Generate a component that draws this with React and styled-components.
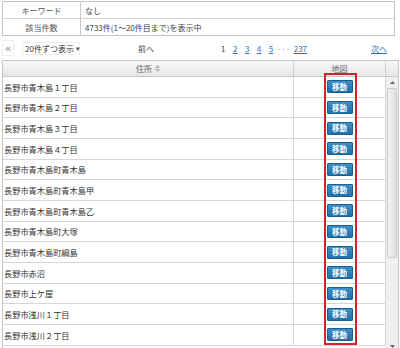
import React from "react";
import styled, { createGlobalStyle } from "styled-components";

const GlobalStyle = createGlobalStyle`
  body {
    margin: 0;
    background: #fff;
    font-family: "Noto Sans CJK JP", "Noto Sans", sans-serif;
    color: #333;
  }
`;

const addresses = [
  "長野市青木島１丁目",
  "長野市青木島２丁目",
  "長野市青木島３丁目",
  "長野市青木島４丁目",
  "長野市青木島町青木島",
  "長野市青木島町青木島甲",
  "長野市青木島町青木島乙",
  "長野市青木島町大塚",
  "長野市青木島町綱島",
  "長野市赤沼",
  "長野市上ケ屋",
  "長野市浅川１丁目",
  "長野市浅川２丁目",
];

const pages = ["2", "3", "4", "5"];

const SortIcon = () => (
  <svg width="5" height="7" viewBox="0 0 5 7">
    <path d="M2.5 0 L5 3 L0 3 Z" fill="#b5b5b5" />
    <path d="M2.5 7 L5 4 L0 4 Z" fill="#b5b5b5" />
  </svg>
);

const Arrow = ({ down }) => (
  <svg width="5" height="3" viewBox="0 0 5 3">
    <path d={down ? "M0 0 L5 0 L2.5 3 Z" : "M2.5 0 L5 3 L0 3 Z"} fill="#666" />
  </svg>
);

const App = () => {
  return (
    <Page>
      <GlobalStyle />
      <InfoTable>
        <InfoRow>
          <InfoLabel>キーワード</InfoLabel>
          <InfoValue>なし</InfoValue>
        </InfoRow>
        <InfoRow last>
          <InfoLabel>該当件数</InfoLabel>
          <InfoValue>4733件(1～20件目まで)を表示中</InfoValue>
        </InfoRow>
      </InfoTable>

      <Nav>
        <FirstBtn>«</FirstBtn>
        <PerPage>
          20件ずつ表示 <Caret>▾</Caret>
        </PerPage>
        <PrevText>前へ</PrevText>
        <Pages>
          <Current>1</Current>
          {pages.map((p) => (
            <PageLink key={p}>{p}</PageLink>
          ))}
          <Dots>···</Dots>
          <PageLink>237</PageLink>
        </Pages>
        <NextLink>次へ</NextLink>
      </Nav>

      <Grid>
        <Header>
          <HeadCell>
            住所 <SortIcon />
          </HeadCell>
          <HeadCell>地図</HeadCell>
          <HeadCell />
        </Header>
        <Body>
          <RowList>
            {addresses.map((a, i) => (
              <Row key={i}>
                <AddrCell>{a}</AddrCell>
                <MapCell>
                  <MoveBtn>移動</MoveBtn>
                </MapCell>
              </Row>
            ))}
          </RowList>
          <ScrollBar>
            <ScrollArrow>
              <Arrow />
            </ScrollArrow>
            <Track>
              <Thumb />
            </Track>
            <ScrollArrow>
              <Arrow down />
            </ScrollArrow>
          </ScrollBar>
        </Body>
        <Highlight />
      </Grid>
    </Page>
  );
};

const Page = styled.div`
  width: 400px;
  height: 348px;
  box-sizing: border-box;
  padding: 1px 1px 0 2px;
  overflow: hidden;
  font-size: 8px;
`;

const InfoTable = styled.div`
  width: 393px;
  border: 1px solid #c4c4c4;
  box-sizing: border-box;
`;

const InfoRow = styled.div`
  display: grid;
  grid-template-columns: 78px 1fr;
  height: 16px;
  border-bottom: ${(props) => (props.last ? "none" : "1px solid #d4d4d4")};
  align-items: stretch;
`;

const InfoLabel = styled.div`
  display: flex;
  align-items: center;
  justify-content: center;
  border-right: 1px solid #c8c8c8;
  color: #555;
`;

const InfoValue = styled.div`
  display: flex;
  align-items: center;
  padding-left: 4px;
  color: #444;
`;

const Nav = styled.div`
  display: flex;
  align-items: center;
  height: 24px;
  width: 393px;
`;

const FirstBtn = styled.div`
  width: 10px;
  height: 14px;
  border: 1px solid #efefef;
  display: flex;
  align-items: center;
  justify-content: center;
  color: #8a8a8a;
  font-family: "DejaVu Sans", sans-serif;
  font-size: 11px;
  line-height: 1;
`;

const PerPage = styled.div`
  margin-left: 8px;
  width: 58px;
  height: 13px;
  box-sizing: border-box;
  border: 1px solid #ececec;
  display: flex;
  align-items: center;
  padding-left: 2px;
  color: #333;
  white-space: nowrap;
`;

const Caret = styled.span`
  font-size: 7px;
  margin-left: 2px;
  color: #444;
`;

const PrevText = styled.div`
  width: 132px;
  text-align: center;
  color: #444;
`;

const Pages = styled.div`
  display: flex;
  align-items: center;
  gap: 7.5px;
  margin-left: 9px;
`;

const Current = styled.span`
  color: #444;
`;

const PageLink = styled.span`
  color: #2a6fb8;
  text-decoration: underline;
`;

const Dots = styled.span`
  color: #999;
  margin: 0 -4px 0 -4px;
`;

const NextLink = styled.span`
  margin-left: auto;
  margin-right: 8px;
  color: #2a6fb8;
  text-decoration: underline;
`;

const Grid = styled.div`
  position: relative;
  width: 397px;
  border: 1px solid #c6c6c6;
  border-bottom: none;
  box-sizing: border-box;
`;

const Header = styled.div`
  display: grid;
  grid-template-columns: 291px 92px 1fr;
  height: 15px;
  background: linear-gradient(#f8f8f8, #e6e6e6);
  border-bottom: 1px solid #c8c8c8;
`;

const HeadCell = styled.div`
  display: flex;
  align-items: center;
  justify-content: center;
  gap: 3px;
  color: #666;
  border-right: 1px solid #d2d2d2;
  &:last-child {
    border-right: none;
  }
`;

const Body = styled.div`
  display: flex;
  height: 275px;
  overflow: hidden;
`;

const RowList = styled.div`
  width: 383px;
  flex: none;
`;

const Row = styled.div`
  display: grid;
  grid-template-columns: 291px 92px;
  height: 20.67px;
  box-sizing: border-box;
  border-bottom: 1px solid #d6d6d6;
`;

const AddrCell = styled.div`
  display: flex;
  align-items: center;
  padding-left: 1px;
  font-size: 8.2px;
  color: #333;
  border-right: 1px solid #d6d6d6;
  white-space: nowrap;
`;

const MapCell = styled.div`
  display: flex;
  align-items: center;
  justify-content: center;
  border-right: 1px solid #d6d6d6;
`;

const MoveBtn = styled.button`
  width: 26px;
  height: 13px;
  padding: 0;
  border: 1px solid #1d5f90;
  border-radius: 1px;
  background: linear-gradient(#3d8fc6, #2071aa);
  color: #fff;
  font-family: "Noto Sans CJK JP", sans-serif;
  font-size: 7.5px;
  font-weight: bold;
  line-height: 1;
`;

const ScrollBar = styled.div`
  flex: 1;
  display: flex;
  flex-direction: column;
  background: #f0f0f0;
`;

const ScrollArrow = styled.div`
  height: 11px;
  display: flex;
  align-items: center;
  justify-content: center;
  flex: none;
`;

const Track = styled.div`
  flex: 1;
  padding: 0 1px;
`;

const Thumb = styled.div`
  height: 170px;
  box-sizing: border-box;
  border: 1px solid #c9c9c9;
  border-radius: 2px;
  background: linear-gradient(to right, #f4f4f4, #dedede);
`;

const Highlight = styled.div`
  position: absolute;
  left: 321px;
  top: 12px;
  width: 33px;
  height: 272px;
  box-sizing: border-box;
  border: 2px solid #d3222a;
  pointer-events: none;
`;

export default App;
